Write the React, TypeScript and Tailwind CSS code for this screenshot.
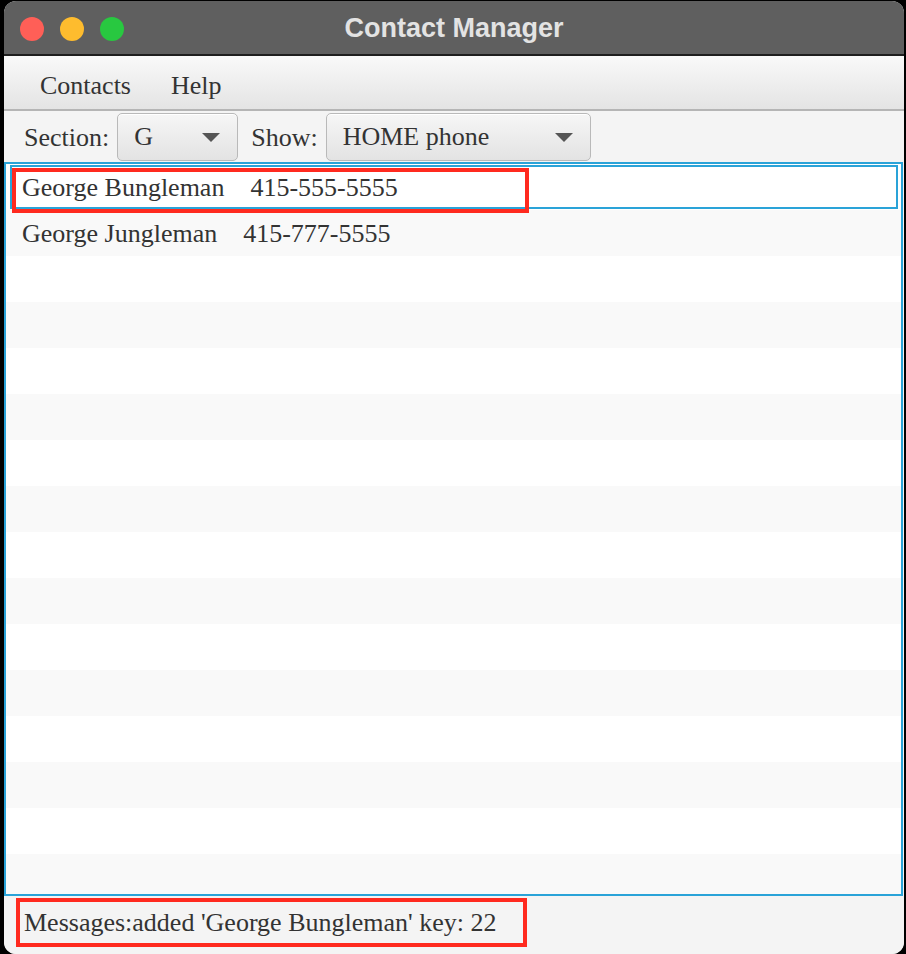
const serifFont = "font-['Liberation_Serif','Times_New_Roman',serif]";

function Combo({ value, width }: { value: string; width: string }) {
  return (
    <div
      className={`${width} h-[48px] flex items-center justify-between pl-[16px] pr-[17px] rounded-[5px] border border-[#b9b9b9] bg-gradient-to-b from-[#f6f6f6] to-[#e3e3e3] shadow-[inset_0_1px_0_#ffffff]`}
    >
      <span className={`${serifFont} text-[26px] text-[#333333] leading-none`}>{value}</span>
      <svg width="18" height="9" viewBox="0 0 18 9">
        <path d="M0 0 L18 0 L9 9 Z" fill="#555555" />
      </svg>
    </div>
  );
}

const rows = [
  { name: "George Bungleman", phone: "415-555-5555" },
  { name: "George Jungleman", phone: "415-777-5555" },
];

export default function App() {
  const filler = Array.from({ length: 14 });
  return (
    <div className="w-[906px] h-[954px] bg-black pt-[1px] pl-[4px] pr-[2px] overflow-hidden">
      <div className={`relative w-[900px] h-[953px] rounded-[12px] overflow-hidden flex flex-col bg-[#f4f4f4] ${serifFont}`}>
        {/* title bar */}
        <div className="relative h-[55px] bg-[#5f5f5f] border-b-2 border-[#1e1e1e] flex items-center shrink-0">
          <div className="flex items-center gap-[16px] pl-[16px] pt-[3px]">
            <div className="w-[24px] h-[24px] rounded-full bg-[#ff5f57]" />
            <div className="w-[24px] h-[24px] rounded-full bg-[#febc2e]" />
            <div className="w-[24px] h-[24px] rounded-full bg-[#28c840]" />
          </div>
          <div className="absolute inset-0 flex items-center justify-center pt-[1px] text-[27px] font-bold text-[#e3e3e3] font-['Liberation_Sans',Arial,sans-serif]">
            Contact Manager
          </div>
        </div>

        {/* menu bar */}
        <div className="h-[55px] shrink-0 flex items-center gap-[40px] pl-[36px] pt-[5px] bg-gradient-to-b from-[#f9f9f9] to-[#e4e4e4] border-b-2 border-[#b5b5b5] text-[26px] text-[#333333]">
          <span>Contacts</span>
          <span>Help</span>
        </div>

        {/* toolbar */}
        <div className="h-[51px] shrink-0 flex items-center pl-[20px] pt-[1px] bg-[#f4f4f4] text-[26px] text-[#333333]">
          <span className="mr-[8px]">Section:</span>
          <Combo value="G" width="w-[121px]" />
          <span className="ml-[13px] mr-[8px]">Show:</span>
          <Combo value="HOME phone" width="w-[265px]" />
        </div>

        {/* list */}
        <div className="flex-1 mr-[1px] border-2 border-[#2aa3d8] bg-white overflow-hidden">
          {rows.map((r, i) => (
            <div
              key={r.name}
              className={`relative h-[46px] flex items-center pl-[16px] text-[26px] text-[#333333] ${i % 2 === 1 ? "bg-[#f9f9f9]" : "bg-white"}`}
            >
              {i === 0 && <div className="absolute left-[4px] right-[3px] top-[1px] bottom-[1px] border-2 border-[#2aa3d8]" />}
              <span>{r.name}</span>
              <span className="ml-[26px]">{r.phone}</span>
            </div>
          ))}
          {filler.map((_, i) => (
            <div key={i} className={`h-[46px] ${(i + rows.length) % 2 === 1 ? "bg-[#f9f9f9]" : "bg-white"}`} />
          ))}
        </div>

        {/* status */}
        <div className="h-[58px] shrink-0 flex items-center pl-[20px] pb-[6px] bg-[#f4f4f4] text-[26px] text-[#333333]">
          Messages:added 'George Bungleman' key: 22
        </div>

        {/* annotation boxes */}
        <div className="absolute left-[8px] top-[167px] w-[517px] h-[45px] border-4 border-[#ff2a1f]" />
        <div className="absolute left-[12px] top-[897px] w-[511px] h-[49px] border-4 border-[#ff2a1f]" />
      </div>
    </div>
  );
}
